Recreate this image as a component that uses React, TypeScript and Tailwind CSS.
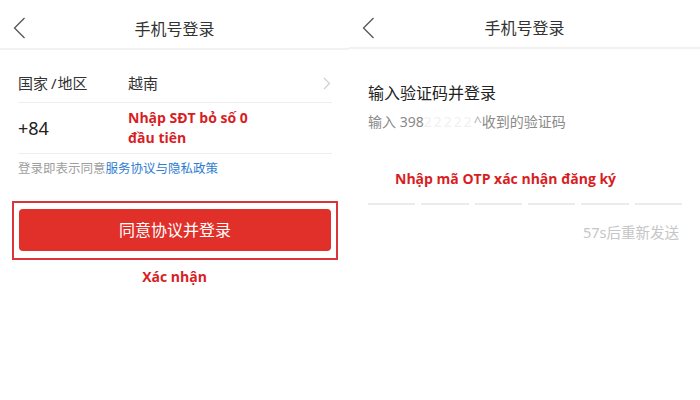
import React from "react";

const cjk = "font-['Noto_Sans','Noto_Sans_CJK_SC',sans-serif]";
const viet = "font-['Open_Sans','Noto_Sans',sans-serif]";

function BackArrow() {
  return (
    <svg width="13" height="22" viewBox="0 0 13 22" className="absolute left-[13px] top-[17px]">
      <path d="M11.5 1 L1.5 11 L11.5 21" fill="none" stroke="#555" strokeWidth="1.3" />
    </svg>
  );
}

function Header({ line }: { line: string }) {
  return (
    <div className={`relative flex items-center justify-center pt-[9px] ${line}`}>
      <BackArrow />
      <span className="text-[16px] text-[#333]">手机号登录</span>
    </div>
  );
}

function PhonePanel() {
  return (
    <div className="w-[349px] shrink-0">
      <Header line="h-[50px] border-b-2 border-[#f1f1f1]" />
      <div className="pl-[18px] pr-[17px] pt-[14px]">
        <div className="flex h-[39px] items-center border-b border-[#eeeeee] text-[15px] text-[#333]">
          <span className="w-[110px]">
            国家<span className="ml-[3px] mr-[1px]">/</span>地区
          </span>
          <span className="flex-1">越南</span>
          <svg width="8" height="13" viewBox="0 0 8 13" className="mr-[1px]">
            <path d="M1 1 L6.5 6.5 L1 12" fill="none" stroke="#cfcfcf" strokeWidth="1.1" />
          </svg>
        </div>
        <div className="flex h-[51px] items-center border-b border-[#eeeeee]">
          <span className="w-[110px] text-[18px] text-[#222]">+84</span>
          <div className={`${viet} text-[14px] font-bold leading-[20px] text-[#d81e25]`}>
            <div>Nhập SĐT bỏ số 0</div>
            <div>đầu tiên</div>
          </div>
        </div>
        <div className="flex h-[31px] items-center text-[12.5px]">
          <span className="text-[#9e9e9e]">登录即表示同意</span>
          <span className="text-[#2f7dd0]">服务协议与隐私政策</span>
        </div>
      </div>
      <div className="ml-[12px] mt-[16px] w-[326px] border-2 border-[#d9353b] pb-[7px] pl-[5px] pr-[5px] pt-[6px]">
        <div className="flex h-[42px] items-center justify-center rounded-[4px] bg-[#e1302a] text-[16px] text-white">
          同意协议并登录
        </div>
      </div>
      <div className={`${viet} mt-[6px] text-center text-[14px] font-bold text-[#d81e25]`}>
        Xác nhận
      </div>
    </div>
  );
}

function CodePanel() {
  return (
    <div className="flex-1">
      <Header line="h-[49px] border-b-2 border-[#f1f1f1]" />
      <div className="pl-[19px] pr-[18px]">
        <div className="mt-[32px] text-[16px] leading-[24px] text-[#222]">输入验证码并登录</div>
        <div className="mt-[7px] flex items-center text-[14px] leading-[20px] text-[#8a8a8a]">
          <span>输入 398</span>
          <span className="text-[#f1f1f1] tracking-[2px]">22222</span>
          <span className="text-[#b0b0b0]">^</span>
          <span>收到的验证码</span>
        </div>
        <div className={`${viet} mt-[37px] pl-[27px] text-[14px] font-bold leading-[20px] text-[#d81e25]`}>
          Nhập mã OTP xác nhận đăng ký
        </div>
        <div className="mt-[14px] flex gap-[6px]">
          {[0, 1, 2, 3, 4, 5].map((i) => (
            <div key={i} className="h-[2px] flex-1 bg-[#ebebeb]" />
          ))}
        </div>
        <div className="mt-[17px] pr-[3px] text-right text-[14.5px] leading-[20px] text-[#c6c6c6]">
          57s后重新发送
        </div>
      </div>
    </div>
  );
}

export default function App() {
  return (
    <div className={`${cjk} flex h-[400px] w-[700px] overflow-hidden bg-white`}>
      <PhonePanel />
      <CodePanel />
    </div>
  );
}
